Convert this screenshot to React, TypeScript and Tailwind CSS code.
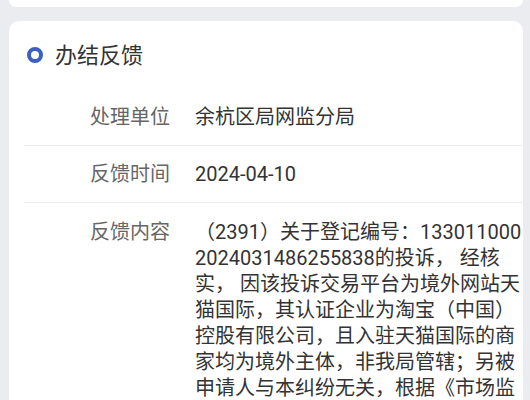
export default function App() {
  const lines = [
    "（2391）关于登记编号：133011000",
    "2024031486255838的投诉， 经核",
    "实， 因该投诉交易平台为境外网站天",
    "猫国际，其认证企业为淘宝（中国）",
    "控股有限公司，且入驻天猫国际的商",
    "家均为境外主体，非我局管辖；另被",
    "申请人与本纠纷无关，根据《市场监",
  ];

  return (
    <div
      className="w-[530px] h-[400px] overflow-hidden bg-[#ebecf0] px-[9px]"
      style={{ fontFamily: "Roboto, 'Noto Sans CJK SC', sans-serif" }}
    >
      {/* previous card, bottom edge only */}
      <div className="h-[7px] w-[514px] bg-white rounded-b-[10px]" />

      <div className="mt-[14px] w-[514px] bg-white rounded-[10px] pb-[20px]">
        {/* header */}
        <div className="h-[68px] flex items-center pl-[18px]">
          <span className="w-[16px] h-[16px] rounded-full border-[4px] border-[#3c5fc2]" />
          <span className="ml-[12px] text-[22px] text-[#333]">办结反馈</span>
        </div>

        <div className="ml-[15px]">
          <div className="h-[57px] flex items-center border-b border-[#ededed]">
            <div className="w-[146px] text-right text-[20px] text-[#666]">处理单位</div>
            <div className="ml-[25px] text-[20px] text-[#333]">余杭区局网监分局</div>
          </div>

          <div className="h-[57px] flex items-center border-b border-[#ededed]">
            <div className="w-[146px] text-right text-[20px] text-[#666]">反馈时间</div>
            <div className="ml-[25px] text-[20px] text-[#333]">2024-04-10</div>
          </div>

          <div className="flex pt-[16px]">
            <div className="w-[146px] text-right text-[20px] leading-[26px] text-[#666]">反馈内容</div>
            <div className="ml-[25px] w-[322px] text-[20px] leading-[26px] text-[#333]">
              {lines.map((l, i) => (
                <div key={i} className="whitespace-nowrap">{l}</div>
              ))}
            </div>
          </div>
        </div>
      </div>
    </div>
  );
}
